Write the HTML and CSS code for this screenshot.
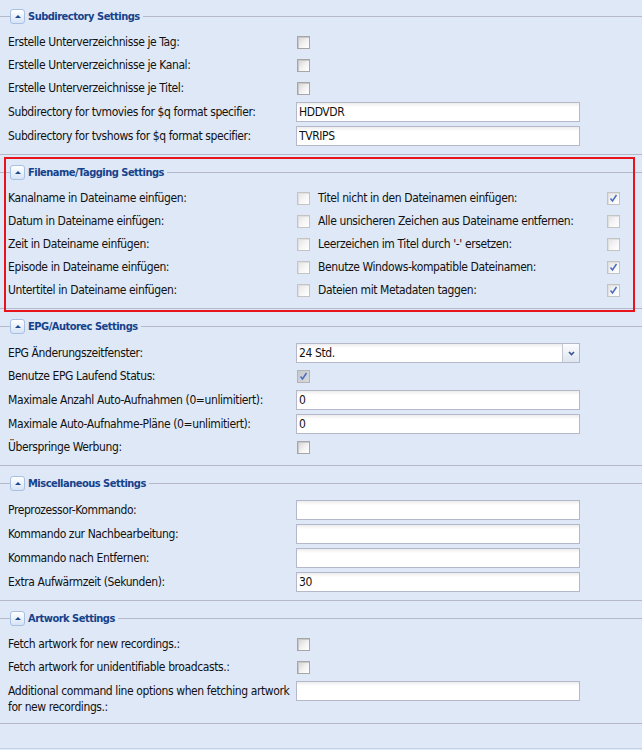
FILE: index.html
```html
<!DOCTYPE html>
<html lang="de">
<head>
    <meta charset="UTF-8">
    <meta name="viewport" content="width=device-width, initial-scale=1.0">
    <title>Recording Settings</title>
    <link rel="stylesheet" href="styles.css">
</head>
<body>
    <div class="settings">

        <div class="fieldset">
            <div class="legend"><span class="tool"><span class="arrow"></span></span><span class="legend-text">Subdirectory Settings</span></div>
            <div class="row"><label class="label">Erstelle Unterverzeichnisse je Tag:</label><span class="checkbox"></span></div>
            <div class="row"><label class="label">Erstelle Unterverzeichnisse je Kanal:</label><span class="checkbox"></span></div>
            <div class="row"><label class="label">Erstelle Unterverzeichnisse je Titel:</label><span class="checkbox"></span></div>
            <div class="row"><label class="label">Subdirectory for tvmovies for $q format specifier:</label><input class="text" type="text" value="HDDVDR"></div>
            <div class="row"><label class="label">Subdirectory for tvshows for $q format specifier:</label><input class="text" type="text" value="TVRIPS"></div>
        </div>

        <div class="fieldset highlighted">
            <div class="legend"><span class="tool"><span class="arrow"></span></span><span class="legend-text">Filename/Tagging Settings</span></div>
            <div class="columns">
                <div class="column">
                    <div class="row"><label class="label">Kanalname in Dateiname einfügen:</label><span class="checkbox faded"></span></div>
                    <div class="row"><label class="label">Datum in Dateiname einfügen:</label><span class="checkbox faded"></span></div>
                    <div class="row"><label class="label">Zeit in Dateiname einfügen:</label><span class="checkbox faded"></span></div>
                    <div class="row"><label class="label">Episode in Dateiname einfügen:</label><span class="checkbox faded"></span></div>
                    <div class="row"><label class="label">Untertitel in Dateiname einfügen:</label><span class="checkbox faded"></span></div>
                </div>
                <div class="column">
                    <div class="row"><label class="label">Titel nicht in den Dateinamen einfügen:</label><span class="checkbox faded"><svg viewBox="0 0 11 11"><path d="M2.5 5.5 L4.5 8 L8.5 2"/></svg></span></div>
                    <div class="row"><label class="label">Alle unsicheren Zeichen aus Dateiname entfernen:</label><span class="checkbox faded"></span></div>
                    <div class="row"><label class="label">Leerzeichen im Titel durch '-' ersetzen:</label><span class="checkbox faded"></span></div>
                    <div class="row"><label class="label">Benutze Windows-kompatible Dateinamen:</label><span class="checkbox faded"><svg viewBox="0 0 11 11"><path d="M2.5 5.5 L4.5 8 L8.5 2"/></svg></span></div>
                    <div class="row"><label class="label">Dateien mit Metadaten taggen:</label><span class="checkbox faded"><svg viewBox="0 0 11 11"><path d="M2.5 5.5 L4.5 8 L8.5 2"/></svg></span></div>
                </div>
            </div>
        </div>

        <div class="fieldset">
            <div class="legend"><span class="tool"><span class="arrow"></span></span><span class="legend-text">EPG/Autorec Settings</span></div>
            <div class="row"><label class="label">EPG Änderungszeitfenster:</label>
                <div class="combo"><span class="combo-value">24 Std.</span><span class="combo-trigger"><svg viewBox="0 0 7 5"><path d="M1 1 L3.5 3.5 L6 1"/></svg></span></div>
            </div>
            <div class="row"><label class="label">Benutze EPG Laufend Status:</label><span class="checkbox greyed"><svg viewBox="0 0 11 11"><path d="M2.5 5.5 L4.5 8 L8.5 2"/></svg></span></div>
            <div class="row"><label class="label">Maximale Anzahl Auto-Aufnahmen (0=unlimitiert):</label><input class="text" type="text" value="0"></div>
            <div class="row"><label class="label">Maximale Auto-Aufnahme-Pläne (0=unlimitiert):</label><input class="text" type="text" value="0"></div>
            <div class="row"><label class="label">Überspringe Werbung:</label><span class="checkbox"></span></div>
        </div>

        <div class="fieldset">
            <div class="legend"><span class="tool"><span class="arrow"></span></span><span class="legend-text">Miscellaneous Settings</span></div>
            <div class="row"><label class="label">Preprozessor-Kommando:</label><input class="text" type="text" value=""></div>
            <div class="row"><label class="label">Kommando zur Nachbearbeitung:</label><input class="text" type="text" value=""></div>
            <div class="row"><label class="label">Kommando nach Entfernen:</label><input class="text" type="text" value=""></div>
            <div class="row"><label class="label">Extra Aufwärmzeit (Sekunden):</label><input class="text" type="text" value="30"></div>
        </div>

        <div class="fieldset">
            <div class="legend"><span class="tool"><span class="arrow"></span></span><span class="legend-text">Artwork Settings</span></div>
            <div class="row"><label class="label">Fetch artwork for new recordings.:</label><span class="checkbox"></span></div>
            <div class="row"><label class="label">Fetch artwork for unidentifiable broadcasts.:</label><span class="checkbox"></span></div>
            <div class="row top"><label class="label">Additional command line options when fetching artwork for new recordings.:</label><input class="text" type="text" value=""></div>
        </div>

        <div class="footer"></div>
    </div>
</body>
</html>
```

FILE: styles.css
```css
html, body {
    margin: 0;
    overflow: hidden;
    background-color: #dfe8f6;
}
body {
    font-family: "DejaVu Sans Condensed", "DejaVu Sans", sans-serif;
    font-stretch: condensed;
    font-size: 12px;
    letter-spacing: -0.4px;
    color: #111;
}
.settings {
    padding-top: 8px;
}
.fieldset {
    padding: 0 8px 4px;
    border-bottom: 1px solid #b5b8c8;
    margin-bottom: 9px;
}
.legend {
    display: flex;
    align-items: center;
    height: 16px;
    margin: 0 -8px 9px;
}
.legend::before {
    content: "";
    width: 10px;
    height: 1px;
    background-color: #b5b8c8;
}
.legend::after {
    content: "";
    flex: 1;
    height: 1px;
    margin-left: 3px;
    background-color: #b5b8c8;
}
.tool {
    width: 15px;
    height: 15px;
    box-sizing: border-box;
    border: 1px solid #a7c0e4;
    border-radius: 3px;
    background: linear-gradient(#ffffff, #d6e3f5);
    display: flex;
    align-items: center;
    justify-content: center;
}
.arrow {
    width: 0;
    height: 0;
    border-left: 3px solid transparent;
    border-right: 3px solid transparent;
    border-bottom: 3px solid #1d4a8c;
}
.legend-text {
    margin-left: 3px;
    font-size: 11px;
    font-weight: bold;
    letter-spacing: -0.5px;
    color: #15428b;
}
.row {
    display: flex;
    align-items: center;
    min-height: 19px;
    margin-bottom: 4px;
}
.row.top {
    align-items: flex-start;
}
.label {
    width: 288px;
    flex-shrink: 0;
    line-height: 15px;
}
.row.top .label {
    padding-top: 2px;
    line-height: 16px;
}
.columns {
    display: grid;
    grid-template-columns: 310px 1fr;
}
.checkbox {
    width: 13px;
    height: 13px;
    margin-left: 1px;
    box-sizing: border-box;
    border: 1px solid #a6a6a6;
    background: linear-gradient(135deg, #d2d2d2, #f2f2f2 55%, #ffffff);
    box-shadow: inset 1px 1px 0 #c8c8c8;
    display: flex;
    align-items: center;
    justify-content: center;
}
.checkbox.faded {
    border-color: #c4c4c4;
    background: linear-gradient(135deg, #e2e2e2, #f6f6f6 55%, #ffffff);
    box-shadow: inset 1px 1px 0 #e0e0e0;
}
.checkbox.greyed {
    border-color: #b4b4b4;
    background: linear-gradient(135deg, #c6c9cd, #d6d8dc);
    box-shadow: none;
}
.checkbox svg {
    width: 11px;
    height: 11px;
    fill: none;
    stroke: #4a6cc0;
    stroke-width: 1.5;
}
.text {
    width: 284px;
    height: 20px;
    box-sizing: border-box;
    margin: 0;
    padding: 0 2px;
    border: 1px solid #b5b8c8;
    border-radius: 0;
    background: linear-gradient(#ececec, #ffffff 4px);
    font: inherit;
    letter-spacing: inherit;
    color: #111;
    outline: none;
}
.combo {
    display: flex;
    width: 284px;
    height: 20px;
    box-sizing: border-box;
    border: 1px solid #b5b8c8;
    background: linear-gradient(#ececec, #ffffff 4px);
}
.combo-value {
    flex: 1;
    padding: 0 2px;
    line-height: 18px;
}
.combo-trigger {
    width: 16px;
    border-left: 1px solid #c2c7d2;
    background: linear-gradient(#fbfcfe, #dfe6f0);
    display: flex;
    align-items: center;
    justify-content: center;
}
.combo-trigger svg {
    width: 7px;
    height: 5px;
    fill: none;
    stroke: #35558f;
    stroke-width: 1.6;
}
.highlighted {
    position: relative;
}
.highlighted::after {
    content: "";
    position: absolute;
    left: 4px;
    right: 7px;
    top: -7px;
    bottom: -4px;
    border: 2px solid #e8141c;
    pointer-events: none;
}
.footer {
    height: 15px;
    border-bottom: 1px solid #c4d2e8;
}
```
